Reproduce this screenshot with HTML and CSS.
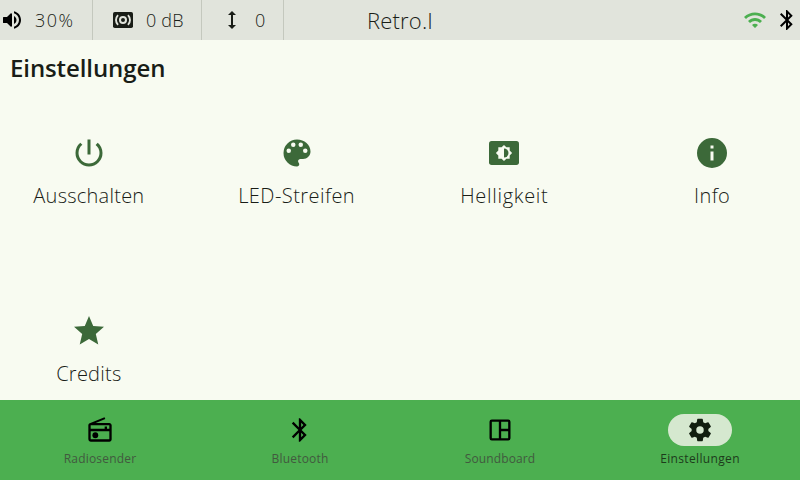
FILE: index.html
```html
<!DOCTYPE html>
<html lang="de">
<head>
<meta charset="utf-8">
<title>Retro.I</title>
<link rel="stylesheet" href="styles.css">
</head>
<body>
<header class="bar">
  <div class="stat volume"><svg viewBox="0 0 24 24"><path d="M3 9.6v4.8c0 .4.2.6.6.6H7l3.6 3.6c.5.5 1.400.2 1.400-.6V6c0-.8-.9-1.100-1.400-.6L7 9H3.600c-.4 0-.6.2-.6.6zM16.500 12c0-1.770-1.020-3.290-2.500-4.030v8.050c1.480-.73 2.500-2.250 2.500-4.020zM14 3.230v2.060c2.890.86 5 3.540 5 6.710s-2.110 5.850-5 6.710v2.060c4.010-.91 7-4.490 7-8.770s-2.990-7.860-7-8.770z"/></svg><span>30%</span></div>
  <div class="stat bass"><svg viewBox="0 0 24 24"><rect x="2" y="4" width="20" height="16" rx="1.800"/><g fill="none" stroke="#e1e4dc"><circle cx="12" cy="12" r="3" stroke-width="2"/><path d="M7.050 7.050a7 7 0 0 0 0 9.900M16.950 7.050a7 7 0 0 1 0 9.900" stroke-width="1.900"/></g></svg><span>0 dB</span></div>
  <div class="stat treble"><svg viewBox="0 0 24 24"><path d="M13 6.990h3L12 3 8 6.990h3v10.020H8L12 21l4-3.990h-3z"/></svg><span>0</span></div>
  <h1 class="title">Retro.I</h1>
  <div class="status">
    <svg class="wifi" viewBox="0 0 24 24"><path d="M1 9l2 2c4.970-4.970 13.030-4.970 18 0l2-2C16.930 2.930 7.080 2.930 1 9zm8 8l3 3 3-3c-1.650-1.660-4.340-1.660-6 0zm-4-4l2 2c2.760-2.760 7.240-2.760 10 0l2-2C15.140 9.140 8.870 9.140 5 13z"/></svg>
    <svg viewBox="0 0 24 24"><path d="M17.710 7.710L12 2h-1v7.590L6.410 5 5 6.410 10.590 12 5 17.590 6.410 19 11 14.410V22h1l5.710-5.710-4.300-4.290 4.300-4.290zM13 5.830l1.880 1.880L13 9.590V5.830zm1.880 10.460L13 18.170v-3.760l1.880 1.880z"/></svg>
  </div>
</header>
<main>
  <h2>Einstellungen</h2>
  <div class="grid">
    <div class="tile t1"><svg viewBox="0 0 24 24"><path d="M13 3h-2v10h2V3zm4.830 2.170l-1.420 1.420A6.920 6.920 0 0 1 19 12c0 3.870-3.130 7-7 7s-7-3.130-7-7c0-2.190 1-4.140 2.580-5.420L6.170 5.170A8.930 8.930 0 0 0 3 12a9 9 0 0 0 18 0c0-2.740-1.230-5.180-3.170-6.830z"/></svg><span>Ausschalten</span></div>
    <div class="tile t2"><svg viewBox="0 0 24 24"><path d="M12 3a9 9 0 0 0 0 18c.83 0 1.500-.67 1.500-1.500 0-.39-.15-.74-.39-1.010-.23-.26-.38-.61-.38-.99 0-.83.67-1.500 1.500-1.500H16c2.760 0 5-2.240 5-5 0-4.420-4.030-8-9-8zm-5.500 9a1.500 1.500 0 1 1 0-3 1.500 1.500 0 0 1 0 3zm3-4a1.500 1.500 0 1 1 0-3 1.500 1.500 0 0 1 0 3zm5 0a1.500 1.500 0 1 1 0-3 1.500 1.500 0 0 1 0 3zm3 4a1.500 1.500 0 1 1 0-3 1.500 1.500 0 0 1 0 3z"/></svg><span>LED-Streifen</span></div>
    <div class="tile t3"><svg viewBox="0 0 24 24"><rect x="2" y="4" width="20" height="16" rx="1.800"/><path fill="#f8fbf1" d="M12 6.600l1.600 1.600h2.200v2.200l1.600 1.600-1.600 1.600v2.200h-2.200L12 17.400l-1.600-1.600H8.200v-2.200L6.600 12l1.600-1.600V8.200h2.200z"/><path d="M12 9v6a3 3 0 0 0 0-6z"/></svg><span>Helligkeit</span></div>
    <div class="tile t4"><svg viewBox="0 0 24 24"><path d="M12 2a10 10 0 1 0 0 20 10 10 0 0 0 0-20zm1 15h-2v-6h2v6zm0-8h-2V7h2v2z"/></svg><span>Info</span></div>
    <div class="tile t5"><svg viewBox="0 0 24 24"><path d="M12 17.270L18.180 21l-1.640-7.030L22 9.240l-7.190-.61L12 2 9.190 8.630 2 9.240l5.460 4.730L5.820 21z"/></svg><span>Credits</span></div>
  </div>
</main>
<nav>
  <div class="item n1"><i><svg viewBox="0 0 24 24"><path d="M3.240 6.150C2.510 6.430 2 7.170 2 8v12a2 2 0 0 0 2 2h16c1.110 0 2-.89 2-2V8c0-1.110-.89-2-2-2H8.300l8.260-3.340L15.880 1 3.240 6.150zM20 20H4v-7h16v7zm0-9h-2V9h-2v2H4V8h16v3z"/><circle cx="8" cy="16.480" r="2.500"/></svg></i><span>Radiosender</span></div>
  <div class="item n2"><i><svg viewBox="0 0 24 24"><path d="M17.710 7.710L12 2h-1v7.590L6.410 5 5 6.410 10.590 12 5 17.590 6.410 19 11 14.410V22h1l5.710-5.710-4.300-4.290 4.300-4.290zM13 5.830l1.880 1.880L13 9.590V5.830zm1.880 10.460L13 18.170v-3.760l1.880 1.880z"/></svg></i><span>Bluetooth</span></div>
  <div class="item n3"><i><svg viewBox="0 0 24 24"><path d="M19 3H5a2 2 0 0 0-2 2v14a2 2 0 0 0 2 2h14a2 2 0 0 0 2-2V5a2 2 0 0 0-2-2zM5 5h6v14H5zm8 14v-6h6v6zm6-8h-6V5h6z" fill-rule="evenodd"/></svg></i><span>Soundboard</span></div>
  <div class="item n4 active"><i><svg viewBox="0 0 24 24"><path d="M19.140 12.940c.04-.3.060-.61.060-.94 0-.32-.02-.64-.07-.94l2.030-1.580a.49.49 0 0 0 .12-.61l-1.920-3.320a.488.488 0 0 0-.59-.22l-2.390.96c-.5-.38-1.030-.7-1.620-.94l-.36-2.540a.484.484 0 0 0-.48-.41h-3.840c-.24 0-.43.17-.47.41l-.36 2.540c-.59.240-1.130.57-1.620.94l-2.390-.96c-.22-.08-.47 0-.59.220L2.740 8.870c-.12.210-.08.470.12.610l2.030 1.580c-.05.300-.09.630-.09.940s.02.640.070.940l-2.030 1.580a.49.49 0 0 0-.12.610l1.920 3.320c.12.220.37.290.59.220l2.390-.96c.5.380 1.030.7 1.620.94l.36 2.540c.05.240.24.410.48.410h3.840c.24 0 .44-.17.47-.41l.36-2.540c.59-.24 1.130-.56 1.620-.94l2.390.96c.22.080.47 0 .59-.22l1.920-3.320c.12-.22.070-.47-.12-.61l-2.010-1.580zM12 15.200a3.200 3.200 0 1 1 0-6.400 3.200 3.200 0 0 1 0 6.400z"/></svg></i><span>Einstellungen</span></div>
</nav>
</body>
</html>
```
FILE: styles.css
```css
* { box-sizing: border-box; }
body {
  margin: 0;
  width: 800px;
  height: 480px;
  display: flex;
  flex-direction: column;
  overflow: hidden;
  background: #f8fbf1;
  color: #191d17;
  font-family: "Open Sans", "Noto Sans", sans-serif;
  font-weight: 300;
}
svg { display: block; flex: none; width: 24px; height: 24px; fill: currentColor; }
span { white-space: nowrap; }
h1, h2 { margin: 0; }
.bar {
  position: relative;
  display: flex;
  height: 40px;
  background: #e1e4dc;
}
.stat {
  display: flex;
  align-items: center;
  font-size: 18px;
  border-right: 1px solid #c4c8be;
}
.volume { width: 93px; gap: 11px; letter-spacing: 1.5px; }
.volume svg { color: #000; }
.bass { width: 109px; padding-left: 18px; gap: 11px; letter-spacing: 0.2px; }
.treble { width: 82px; padding-left: 18px; gap: 11px; }
.title {
  position: absolute;
  left: 0;
  right: 0;
  text-align: center;
  font-size: 22px;
  line-height: 40px;
  font-weight: 300;
  letter-spacing: 0.2px;
}
.status { display: flex; align-items: center; gap: 8px; margin-left: auto; margin-right: 1px; color: #000; }
.wifi { color: #4caf50; }
main { height: 360px; overflow: hidden; }
h2 { font-size: 24px; line-height: 36px; padding: 10px 0 0 10px; font-weight: 600; letter-spacing: -0.1px; }
.grid {
  display: grid;
  grid-template-columns: repeat(4, 1fr);
  grid-auto-rows: 148px;
  gap: 30px;
  margin: 13px -1px 0 0;
}
.tile {
  display: flex;
  flex-direction: column;
  align-items: center;
  justify-content: center;
  gap: 10px;
  font-size: 20px;
  line-height: 30px;
  letter-spacing: 0.25px;
}
.t2 { letter-spacing: 0.45px; }
.t3 { letter-spacing: 0.7px; }
.t4 { letter-spacing: 0.4px; }
.tile svg { width: 36px; height: 36px; color: #3c6939; }
nav { display: flex; height: 80px; background: #4caf50; }
.item {
  flex: 1;
  display: flex;
  flex-direction: column;
  align-items: center;
  padding-top: 14px;
  gap: 5px;
  font-size: 12px;
  line-height: 16px;
  font-weight: 400;
  letter-spacing: 0.2px;
  color: #42593f;
}
.item i {
  display: flex;
  width: 64px;
  height: 32px;
  align-items: center;
  justify-content: center;
  border-radius: 16px;
  color: #000;
}
.item svg { width: 28px; height: 28px; }
.n3 { letter-spacing: 0.1px; }
.n4 { letter-spacing: 0.35px; }
.active { color: #1d3b1b; }
.active i { background: #d5e8cf; color: #111f0f; }
```
